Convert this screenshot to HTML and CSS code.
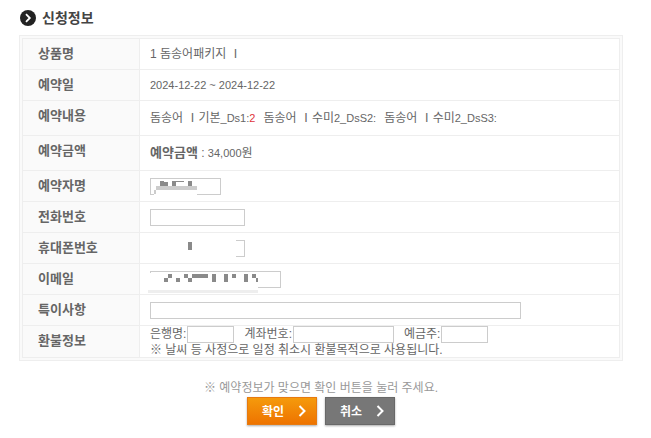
FILE: index.html
```html
<!DOCTYPE html>
<html lang="ko">
<head>
<meta charset="utf-8">
<title>신청정보</title>
<link rel="stylesheet" href="styles.css">
</head>
<body>
<form class="page">
  <h1 class="title">
    <svg class="title-icon" viewBox="0 0 16 16" aria-hidden="true"><circle cx="8" cy="8" r="8" fill="#222"/><path d="M6 4.200L9.800 8L6 11.800" fill="none" stroke="#fff" stroke-width="1.800"/></svg>
    신청정보
  </h1>
  <div class="frame">
    <table class="info">
      <tr><th scope="row">상품명</th><td>1 돔송어패키지 Ⅰ</td></tr>
      <tr><th scope="row">예약일</th><td><span class="num">2024-12-22 ~ 2024-12-22</span></td></tr>
      <tr class="tall"><th scope="row">예약내용</th><td><ul class="items"><li>돔송어 Ⅰ기본<span class="num">_Ds1:<em>2</em></span></li><li>돔송어 Ⅰ수미<span class="num">2_DsS2:</span></li><li>돔송어 Ⅰ수미<span class="num">2_DsS3:</span></li></ul></td></tr>
      <tr class="tall"><th scope="row">예약금액</th><td><b>예약금액</b> : <span class="num">34,000</span>원</td></tr>
      <tr><th scope="row"><label for="name">예약자명</label></th><td>
        <span class="field"><input class="w-name" id="name" type="text"><svg class="mask" viewBox="0 0 140 24" aria-hidden="true"><path fill="#fff" d="M6 8h43v10H6z"/><path fill="#ccc" d="M8 9h41v4H8zM6 13h2v4H6z"/><path fill="#8a8a8a" d="M12 4h4v1h4v4h-8zM24 4h12v1h-8v4h-4zM40 4h4v5h-4z"/></svg></span>
      </td></tr>
      <tr><th scope="row"><label for="phone">전화번호</label></th><td><input class="w-phone" id="phone" type="tel"></td></tr>
      <tr><th scope="row"><label for="mobile">휴대폰번호</label></th><td>
        <span class="field"><input class="w-phone" id="mobile" type="tel"><svg class="mask" viewBox="0 0 140 24" aria-hidden="true"><path fill="#fff" d="M0 0h88v20H0z"/><path fill="#8a8a8a" d="M40 3h4v8h-4z"/></svg></span>
      </td></tr>
      <tr><th scope="row"><label for="email">이메일</label></th><td>
        <span class="field"><input class="w-email" id="email" type="email"><svg class="mask" viewBox="0 0 140 24" aria-hidden="true"><path fill="#fff" d="M2 3h108v16H2z"/><path fill="#eee" d="M0 20h110v3H0z"/><path fill="#8a8a8a" d="M20 4h4v4h-4zM16 8h4v4h-4zM28 8h4v4h-4zM36 4h4v4h-4zM40 8h4v4h-4zM44 4h16v4H44zM64 4h4v8h-4zM76 4h4v8h-4zM84 4h4v4h-4zM96 4h4v8h-4zM104 4h4v4h-4zM108 8h2v4h-2z"/></svg></span>
      </td></tr>
      <tr><th scope="row"><label for="memo">특이사항</label></th><td><input class="w-memo" id="memo" type="text"></td></tr>
      <tr class="refund"><th scope="row">환불정보</th><td>
        <div class="accounts">
          <label>은행명:<input class="w-short" type="text"></label>
          <label>계좌번호:<input class="w-account" type="text"></label>
          <label>예금주:<input class="w-short" type="text"></label>
        </div>
        <p class="note">※ 날씨 등 사정으로 일정 취소시 환불목적으로 사용됩니다.</p>
      </td></tr>
    </table>
  </div>
  <p class="confirm">※ 예약정보가 맞으면 확인 버튼을 눌러 주세요.</p>
  <div class="actions">
    <button class="btn ok" type="submit">확인<svg viewBox="0 0 8 12" aria-hidden="true"><path d="M1.500 1L6.500 6L1.500 11"/></svg></button>
    <button class="btn cancel" type="button">취소<svg viewBox="0 0 8 12" aria-hidden="true"><path d="M1.500 1L6.500 6L1.500 11"/></svg></button>
  </div>
</form>
</body>
</html>
```
FILE: styles.css
```css
* { box-sizing: border-box; }
body {
  margin: 0;
  background: #fff;
  color: #666;
  font: 12px/16px "Liberation Sans", "Noto Sans CJK KR", sans-serif;
}
.page { padding: 8px 28px 8px 19px; }
.title {
  display: flex;
  align-items: center;
  gap: 6px;
  margin: 0 0 7px;
  padding-left: 1px;
  color: #444;
  font-size: 14px;
  line-height: 20px;
}
.title-icon { width: 16px; height: 16px; }
.frame { border: 1px solid #eee; padding: 2px; background: #fafafa; }
.info { width: 100%; border-collapse: collapse; background: #fff; }
.info th, .info td { border: 1px solid #eee; text-align: left; }
.info th {
  width: 117px;
  padding: 7px 0 7px 15px;
  background: #fafafa;
  font-size: 13px;
  vertical-align: top;
}
.info td { padding: 0 0 0 10px; vertical-align: middle; }
.info b { font-size: 13px; }
.num { font-size: 11px; }
.tall { height: 35px; }
.refund { height: 32px; }
.items { display: flex; gap: 8px; margin: 0; padding: 0; list-style: none; }
.items em { color: #e0343c; font-style: normal; }
input {
  display: block;
  height: 17px;
  margin: 0;
  padding: 0 2px;
  border: 1px solid #ccc;
  background: #fff;
  color: #666;
  font: inherit;
}
.field { display: block; position: relative; }
.mask { position: absolute; left: -2px; top: -1px; width: 140px; height: 24px; }
.w-name { width: 71px; }
.w-phone { width: 95px; }
.w-email { width: 131px; }
.w-memo { width: 371px; }
.w-short { width: 47px; }
.w-account { width: 101px; }
.accounts { display: flex; gap: 10px; }
.accounts label { display: flex; gap: 1px; line-height: 16px; }
.note { margin: 0; line-height: 14px; }
.confirm { margin: 19px 0 1px; color: #999; text-align: center; }
.actions { display: flex; justify-content: center; gap: 8px; }
.btn {
  display: flex;
  align-items: center;
  justify-content: space-between;
  width: 70px;
  height: 28px;
  padding: 0 10px 0 14px;
  border: 1px solid;
  color: #fff;
  font: bold 12px/16px "Noto Sans CJK KR", sans-serif;
  box-shadow: 0 1px 2px #aaa;
}
.btn svg { width: 8px; height: 12px; fill: none; stroke: #fff; stroke-width: 2; }
.ok { border-color: #e77a10; background: linear-gradient(#f59a0c, #ee7300); }
.cancel { border-color: #686868; background: #777; }
```
